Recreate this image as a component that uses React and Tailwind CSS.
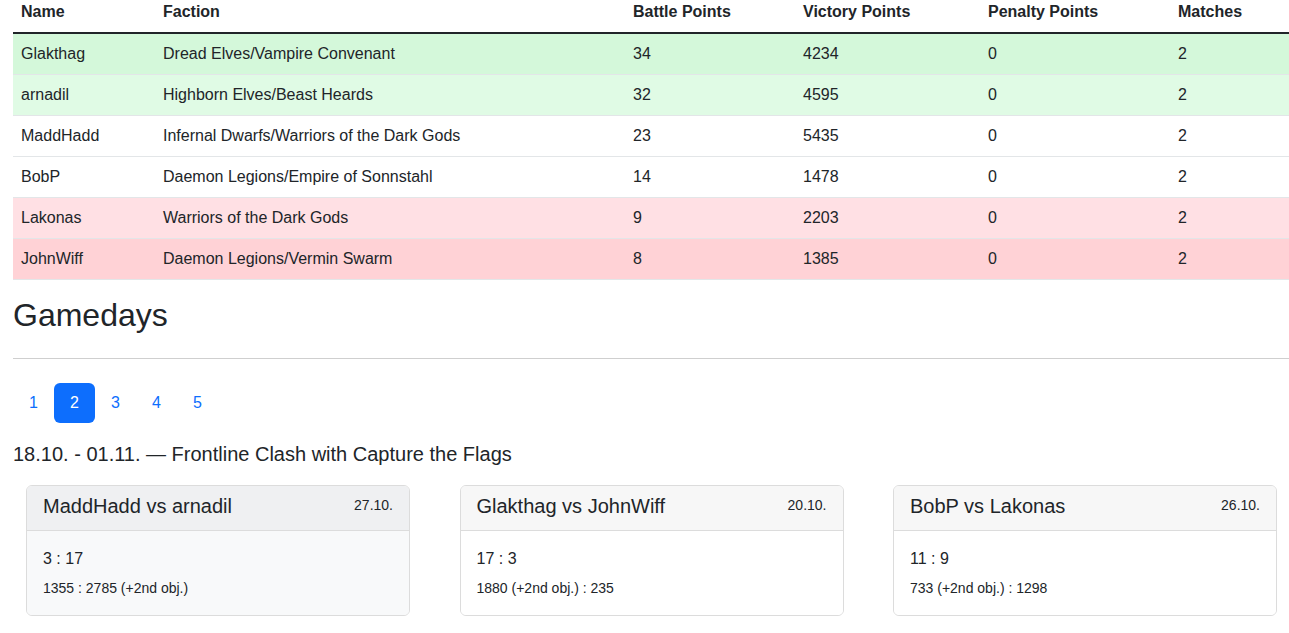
const standings = [
  { name: "Glakthag", faction: "Dread Elves/Vampire Convenant", bp: 34, vp: 4234, pp: 0, m: 2, bg: "bg-[#d4f8da]" },
  { name: "arnadil", faction: "Highborn Elves/Beast Heards", bp: 32, vp: 4595, pp: 0, m: 2, bg: "bg-[#e0fbe5]" },
  { name: "MaddHadd", faction: "Infernal Dwarfs/Warriors of the Dark Gods", bp: 23, vp: 5435, pp: 0, m: 2, bg: "bg-white" },
  { name: "BobP", faction: "Daemon Legions/Empire of Sonnstahl", bp: 14, vp: 1478, pp: 0, m: 2, bg: "bg-white" },
  { name: "Lakonas", faction: "Warriors of the Dark Gods", bp: 9, vp: 2203, pp: 0, m: 2, bg: "bg-[#ffe0e4]" },
  { name: "JohnWiff", faction: "Daemon Legions/Vermin Swarm", bp: 8, vp: 1385, pp: 0, m: 2, bg: "bg-[#ffd2d6]" },
];

const games = [
  { title: "MaddHadd vs arnadil", date: "27.10.", score: "3 : 17", detail: "1355 : 2785 (+2nd obj.)", head: "bg-[#eff0f2]", body: "bg-[#f8f9fa]" },
  { title: "Glakthag vs JohnWiff", date: "20.10.", score: "17 : 3", detail: "1880 (+2nd obj.) : 235", head: "bg-[#f7f7f7]", body: "bg-white" },
  { title: "BobP vs Lakonas", date: "26.10.", score: "11 : 9", detail: "733 (+2nd obj.) : 1298", head: "bg-[#f7f7f7]", body: "bg-white" },
];

function GameCard({ g }) {
  return (
    <div className="w-96 rounded-md border border-[#dcdcdc] overflow-hidden">
      <div className={`flex items-center justify-between px-4 pt-2 pb-3 border-b border-[#dcdcdc] ${g.head}`}>
        <span className="text-[20px] leading-6">{g.title}</span>
        <span className="text-sm leading-6 mt-[-2px]">{g.date}</span>
      </div>
      <div className={`px-4 py-4 ${g.body}`}>
        <p className="text-base leading-6 mb-[6px]">{g.score}</p>
        <p className="text-sm leading-[22px]">{g.detail}</p>
      </div>
    </div>
  );
}

export default function App() {
  let th = "text-left font-bold px-2 pb-2 pt-0 leading-6";
  let td = "px-2 h-[41px] leading-6";
  return (
    <div className="bg-white text-[#212529] pl-[13px] min-h-screen" style={{ fontFamily: '"Liberation Sans", Arial, sans-serif' }}>
      <table className="w-full table-fixed border-collapse text-base">
        <colgroup>
          <col className="w-[142px]" />
          <col className="w-[470px]" />
          <col className="w-[170px]" />
          <col className="w-[185px]" />
          <col className="w-[190px]" />
          <col />
        </colgroup>
        <thead>
          <tr className="border-b-2 border-[#212529]">
            <th className={th}>Name</th>
            <th className={th}>Faction</th>
            <th className={th}>Battle Points</th>
            <th className={th}>Victory Points</th>
            <th className={th}>Penalty Points</th>
            <th className={th}>Matches</th>
          </tr>
        </thead>
        <tbody>
          {standings.map((r, i) => (
            <tr key={i} className={`border-b border-[#e3e6e8] ${r.bg}`}>
              <td className={td}>{r.name}</td>
              <td className={td}>{r.faction}</td>
              <td className={td}>{r.bp}</td>
              <td className={td}>{r.vp}</td>
              <td className={td}>{r.pp}</td>
              <td className={td}>{r.m}</td>
            </tr>
          ))}
        </tbody>
      </table>

      <h2 className="text-[32px] leading-[38px] mt-[16px] mb-2">Gamedays</h2>
      <hr className="border-0 border-t border-[#cfcfcf] mt-6 mb-6" />

      <div className="flex">
        {[1, 2, 3, 4, 5].map((n) => (
          <button
            key={n}
            className={
              n === 2
                ? "w-[41px] h-10 rounded-md bg-[#0d6efd] text-white text-base"
                : "w-[41px] h-10 text-[#0d6efd] text-base"
            }
          >
            {n}
          </button>
        ))}
      </div>

      <h5 className="text-[20px] leading-6 mt-[19px]">18.10. - 01.11. — Frontline Clash with Capture the Flags</h5>

      <div className="flex justify-between pl-[13px] pr-[12px] mt-[19px] pb-4">
        {games.map((g, i) => (
          <GameCard key={i} g={g} />
        ))}
      </div>
    </div>
  );
}
